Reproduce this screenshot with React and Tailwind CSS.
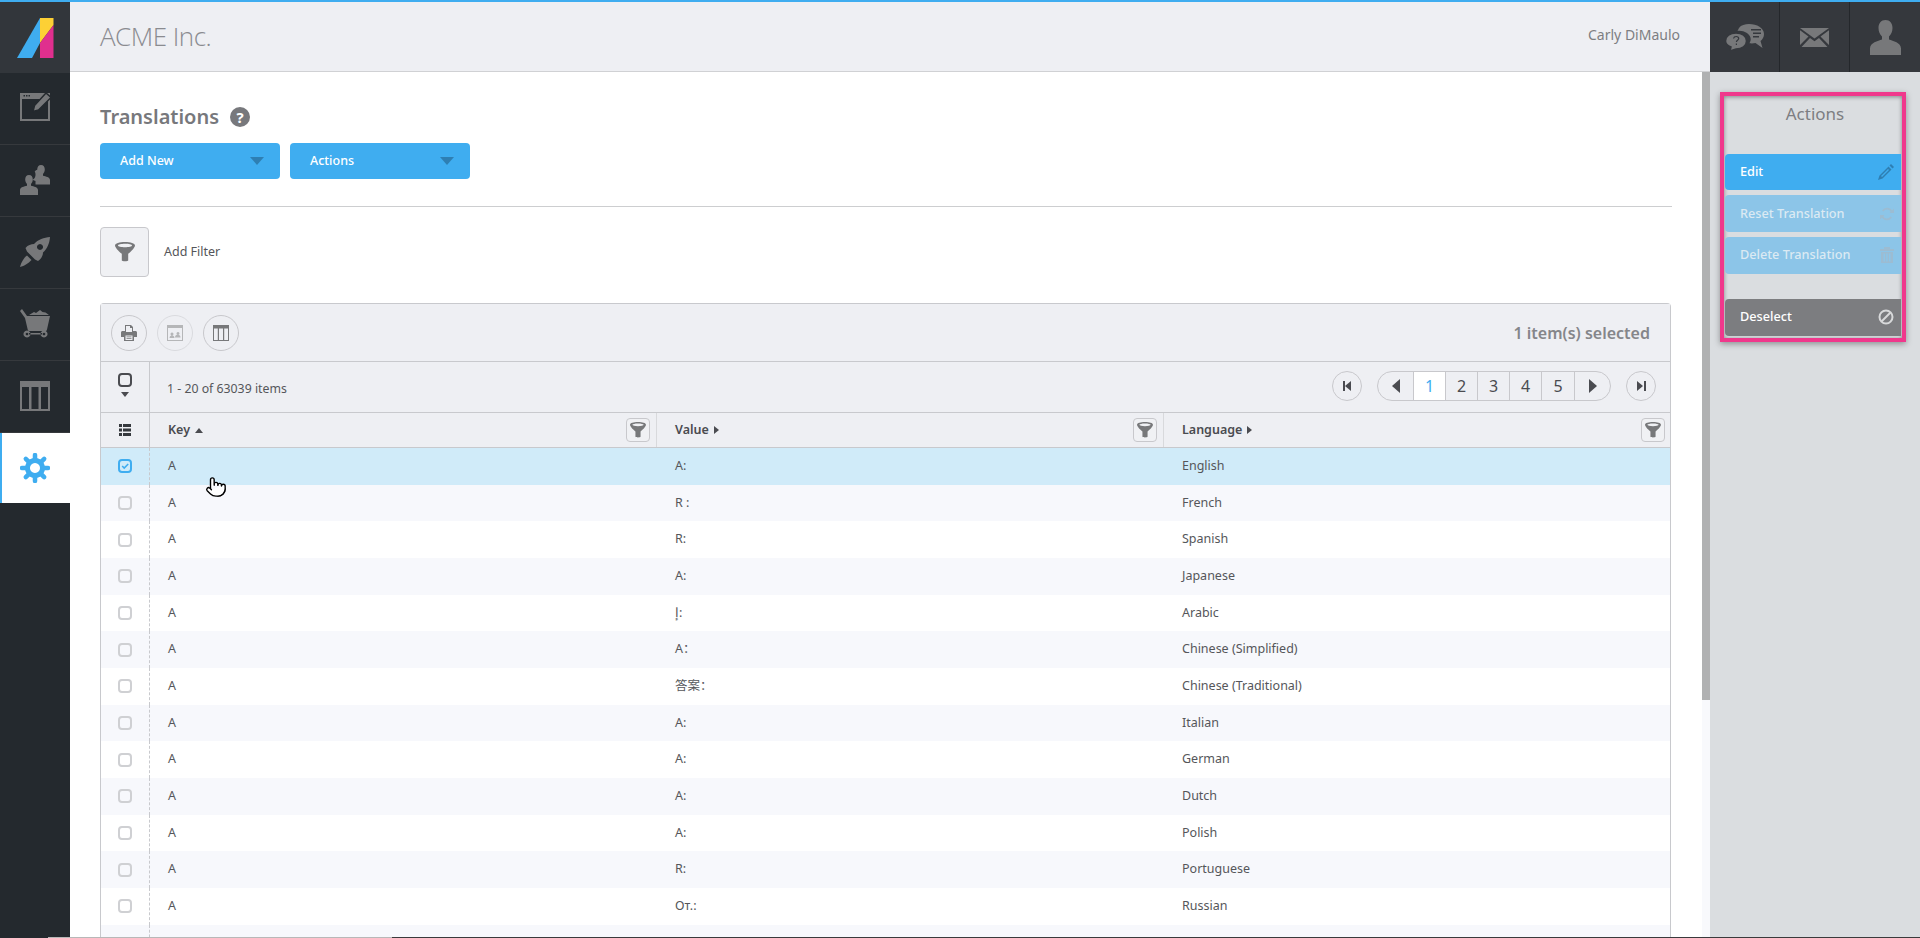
import { Pointer } from 'lucide-react'

const rows = [
  ['A:', 'English'],
  ['R :', 'French'],
  ['R:', 'Spanish'],
  ['A:', 'Japanese'],
  ['إ:', 'Arabic'],
  ['A：', 'Chinese (Simplified)'],
  ['答案：', 'Chinese (Traditional)'],
  ['A:', 'Italian'],
  ['A:', 'German'],
  ['A:', 'Dutch'],
  ['A:', 'Polish'],
  ['R:', 'Portuguese'],
  ['От.:', 'Russian'],
  ['', ''],
]

const gearAngles = [0, 45, 90, 135]

function Funnel({ className }) {
  return (
    <svg className={className} viewBox="0 0 20 20">
      <path fillRule="evenodd" fill="currentColor" d="M10 0C4.500 0 0 1.200 0 3.500c0 1.400 3 5.600 6.800 8.300V18.500c0 1 6.400 1 6.400 0V11.800C17 9.100 20 4.900 20 3.500 20 1.200 15.500 0 10 0zM10 1.800c3.900 0 7 .8 7 1.700s-3.100 1.700-7 1.700-7-.8-7-1.700 3.100-1.700 7-1.700z" />
    </svg>
  )
}

function FilterBtn() {
  return (
    <button className="w-6 h-6 bg-[#f0f1f4] border border-[#c8c8cc] rounded-sm flex items-center justify-center">
      <Funnel className="w-4 h-4 text-[#77787a]" />
    </button>
  )
}

function SideIcon({ children, active }) {
  return (
    <div className={active ? 'h-[70px] mb-0.5 bg-white border-l-2 border-[#3fadf0] flex items-center justify-center pr-0.5 text-[#3fadf0]' : 'h-[72px] pb-0.5 border-b border-[#36393d] flex items-center justify-center text-[#77787a]'}>
      {children}
    </div>
  )
}

function TopIcon({ children, last }) {
  return (
    <div className={last ? 'w-[70px] flex items-center justify-center text-[#77787a]' : 'w-[70px] border-r border-[#24272b] flex items-center justify-center text-[#77787a]'}>
      {children}
    </div>
  )
}

function Circle({ children, faded, small }) {
  if (small) {
    return <div className="w-[30px] h-[30px] rounded-full border border-[#c8c8cc] flex items-center justify-center">{children}</div>
  }
  return (
    <div className={faded ? 'w-9 h-9 rounded-full border border-[#dadbdf] flex items-center justify-center text-[#b5b6b8]' : 'w-9 h-9 rounded-full border border-[#c8c8cc] flex items-center justify-center text-[#77787a]'}>
      {children}
    </div>
  )
}

function Checkbox({ checked }) {
  if (checked) {
    return (
      <div className="w-3.5 h-3.5 rounded-sm border-2 border-[#3fadf0] flex items-center justify-center">
        <svg className="w-2 h-2" viewBox="0 0 10 10"><path d="M1.500 5l2.500 2.500 5-5" fill="none" stroke="#3fadf0" strokeWidth="2" /></svg>
      </div>
    )
  }
  return <div className="w-3.5 h-3.5 rounded-sm border-2 border-[#cfd0d3]" />
}

function ActionBtn({ label, icon, color }) {
  return (
    <div className={color}>
      <span>{label}</span>
      {icon}
    </div>
  )
}

export default function App() {
  return (
    <div className="relative h-[938px] overflow-hidden border-t-2 border-[#3fadf0] flex font-['Noto_Sans','Noto_Sans_CJK_SC',sans-serif] text-[12.5px] text-[#55565a]">
      {/* Sidebar */}
      <div className="w-[70px] shrink-0 bg-[#24292e]">
        <div className="h-[71px] bg-[#32363b] flex items-center justify-center">
          <svg className="w-[37px] h-10" viewBox="0 0 37 40">
            <path d="M0 40L23 0V25L15 40z" fill="#3fadf0" />
            <path d="M23 0H36.500V7L23 25z" fill="#fdd035" />
            <path d="M23 25L36.500 7V40H23z" fill="#e02f8e" />
          </svg>
        </div>
        <SideIcon>
          <svg className="w-[30px] h-7 -mt-0.5" viewBox="0 0 30 28" fill="currentColor">
            <path fillRule="evenodd" d="M0 0H30V28H0zM2 6V26H28V6z" />
            <path d="M3.500 2h1.500v1.500h-1.500zM6 2h1.500v1.500H6zM8.500 2H10v1.500H8.500z" fill="#24292e" />
            <path d="M26 0l5 4.500L18.500 17 13 18.500l1.500-6z" stroke="#24292e" strokeWidth="1.500" />
          </svg>
        </SideIcon>
        <SideIcon>
          <svg className="w-[30px] h-[30px]" viewBox="0 0 30 30" fill="currentColor">
            <path d="M21 0c2.600 0 3.800 2.100 3.800 4.500 0 1.900-.7 3.400-1.800 4.400v1.900c2.800.8 7 1.400 7 4.200v4.500H15.500v-3.500c-.9-.5-1.800-.8-2.500-1v-.5c2-1 2.600-3 2.500-5.500-.1-1.200-.4-2-.8-2.600.8-.7 1.700-1.400 2.500-1.600.1-2.800 1.300-4.800 3.800-4.800z" />
            <path d="M9 10c2.600 0 3.800 2.100 3.800 4.500 0 1.900-.7 3.400-1.800 4.400v1.900c2.800.8 7 1.400 7 4.200V30H0v-5c0-2.800 4.200-3.400 7-4.200v-1.900c-1.100-1-1.800-2.500-1.800-4.400C5.200 12.100 6.400 10 9 10z" />
          </svg>
        </SideIcon>
        <SideIcon>
          <svg className="w-[30px] h-[30px]" viewBox="0 0 30 30" fill="currentColor">
            <path fillRule="evenodd" d="M30 0c-.5 6-2.500 11.500-7 15.500 0 3-1.500 6-5 8.500l-3-1.500-8-8L5.500 11C8 8 11 7 14 7c4-4.500 10-6.500 16-7zM20 7a3 3 0 1 0 .01 0z" />
            <path d="M7 18.500l4.500 4.500C9 26 4 29 0 30c1-4 3.500-9 7-11.500z" />
          </svg>
        </SideIcon>
        <SideIcon>
          <svg className="w-[30px] h-[30px]" viewBox="0 0 30 30" fill="currentColor">
            <path d="M0 2l2-2 5 7h23l-3 13.500c-.2 1-.8 1.500-1.800 1.500H9.500c-1 0-1.500-.5-1.800-1.500L5 9z" />
            <path d="M9 6l5-3 2 1 4-3 2.500 2 3 .5L29 6z" />
            <path fillRule="evenodd" d="M9 24h13v1.500H9zM7 21.500a3.500 3.500 0 1 0 .01 0zM7 23.700a1.300 1.300 0 1 1-.01 0zM24 21.500a3.500 3.500 0 1 0 .01 0zM24 23.700a1.300 1.300 0 1 1-.01 0z" />
          </svg>
        </SideIcon>
        <SideIcon>
          <svg className="w-[30px] h-[30px]" viewBox="0 0 30 30" fill="currentColor">
            <path fillRule="evenodd" d="M0 0H30V30H0zM2 6V28H9V6zM11.500 6V28H18.500V6zM21 6V28H28V6z" />
          </svg>
        </SideIcon>
        <SideIcon active>
          <svg className="w-[30px] h-[30px]" viewBox="0 0 30 30" fill="currentColor">
            <path fillRule="evenodd" d="M15 5a10 10 0 1 0 .01 0zM15 10a5 5 0 1 1-.01 0z" />
            {gearAngles.map((a) => (
              <line key={a} x1="15" y1="2" x2="15" y2="28" stroke="currentColor" strokeWidth="4.500" strokeLinecap="round" strokeDasharray="5 16 5" transform={`rotate(${a} 15 15)`} />
            ))}
          </svg>
        </SideIcon>
      </div>

      <div className="flex-1 min-w-0 flex flex-col">
        {/* Header */}
        <div className="h-[70px] flex shrink-0">
          <div className="flex-1 bg-[#eeeff3] border-b border-[#d0d1d4] flex items-center justify-between pl-[30px] pr-[30px]">
            <span className="text-[26px] font-light tracking-[-0.5px] text-[#8a8b90] font-['Open_Sans',sans-serif]">ACME Inc.</span>
            <span className="text-[14px] text-[#7d7e82] -mt-1">Carly DiMaulo</span>
          </div>
          <div className="w-[210px] bg-[#35383d] flex">
            <TopIcon>
              <svg className="w-10 h-7" viewBox="0 0 40 28" fill="currentColor">
                <path d="M14 5C16 2 20 1 24 1c8 0 15 4 15 10 0 3-1.500 5.500-3.500 7l2 7-7-5c-2 .500-4 .500-6 .300 1-2 1.500-3.500 1-5.500-1-4-6-7-11-7-1 0-1.500 0-2 .200z" />
                <path d="M11 10c6 0 10.500 3 10.500 8s-4.500 8-10.500 8l-6 2 1-4C2.500 22.500 0.500 20.500.5 18c0-5 4.500-8 10.500-8z" stroke="#35383d" strokeWidth="1.500" />
                <path d="M26 6h10v1.500H26zM28 9.500h8V11h-8zM28 13h6v1.500h-6z" fill="#35383d" />
                <path d="M8.500 15.500c.3-1.500 1.500-2 2.700-2 1.300 0 2.500.8 2.500 2.100 0 1.600-2.300 1.800-2.300 3.400M11.400 20.500v1.500" fill="none" stroke="#35383d" strokeWidth="1.200" />
              </svg>
            </TopIcon>
            <TopIcon>
              <svg className="w-[29px] h-[19px]" viewBox="0 0 29 19" fill="currentColor">
                <path d="M0 0L14.500 10.500 29 0zM0 2.300V17l8.500-8.500zM29 2.300V17l-8.500-8.500zM1.500 19H27.500L19 10l-4.500 3.300L10 10z" />
              </svg>
            </TopIcon>
            <TopIcon last>
              <svg className="w-[31px] h-[35px]" viewBox="0 0 31 35" fill="currentColor">
                <path d="M15.500 0c4.500 0 7 3.500 7 8 0 3.500-1.300 6.500-3.500 8.500v3c4 1.500 12 3 12 9V35H0v-6.500c0-6 8-7.500 12-9v-3C9.800 14.500 8.500 11.500 8.500 8c0-4.500 2.500-8 7-8z" />
              </svg>
            </TopIcon>
          </div>
        </div>

        <div className="flex-1 min-h-0 flex">
          {/* Main */}
          <div className="relative flex-1 min-w-0 bg-white px-[30px] pt-[33px]">
            <div className="flex items-center gap-[11px] h-6">
              <span className="text-[20px] font-semibold text-[#77787c]">Translations</span>
              <span className="w-5 h-5 rounded-full bg-[#77787c] text-white text-[15px] font-bold flex items-center justify-center">?</span>
            </div>
            <div className="flex gap-2.5 mt-[14px]">
              <div className="w-[180px] h-9 rounded-sm bg-[#3fadf0] text-white text-[12.5px] font-medium flex items-center justify-between pl-5 pr-4">
                <span>Add New</span>
                <span className="w-0 h-0 border-x-[7px] border-x-transparent border-t-8 border-t-[#2e7fb3]" />
              </div>
              <div className="w-[180px] h-9 rounded-sm bg-[#3fadf0] text-white text-[12.5px] font-medium flex items-center justify-between pl-5 pr-4">
                <span>Actions</span>
                <span className="w-0 h-0 border-x-[7px] border-x-transparent border-t-8 border-t-[#2e7fb3]" />
              </div>
            </div>
            <div className="h-px bg-[#cdced0] mt-[27px]" />
            <div className="flex items-center gap-[15px] mt-5">
              <div className="w-[49px] h-[50px] bg-[#f0f1f4] border border-[#c8c8cc] rounded-sm flex items-center justify-center">
                <Funnel className="w-5 h-5 text-[#77787a]" />
              </div>
              <span className="text-[12.5px]">Add Filter</span>
            </div>

            {/* Table */}
            <div className="mt-[26px] mr-px border-x border-t border-[#c8c9cd] rounded-t-sm">
              <div className="h-[58px] bg-[#eeeff3] border-b border-[#c8c9cd] flex items-center justify-between pl-2.5 pr-[20px]">
                <div className="flex gap-2.5">
                  <Circle>
                    <svg className="w-4 h-4" viewBox="0 0 16 16" fill="currentColor"><path fillRule="evenodd" d="M4 0h6l2 2v4h2.500c.8 0 1.500.7 1.500 1.500V12h-3v4H3v-4H0V7.500C0 6.700.7 6 1.500 6H4zM5 1v6h6V3H9V1zM4.500 10.500V15h7v-4.500zM5.500 11.500h5v.7h-5zM5.500 13h5v.7h-5z" /></svg>
                  </Circle>
                  <Circle faded>
                    <svg className="w-4 h-4" viewBox="0 0 16 16" fill="currentColor"><path fillRule="evenodd" d="M0 0h16v16H0zM1 3v12h14V3zM5 7.500a1.500 1.500 0 1 1-.01 0zM11 7a1.500 1.500 0 1 1-.01 0zM2.500 13c0-2 1.500-2.500 2.500-2.500s2.500.5 2.500 2.500zM8 12.500c0-2.500 1.500-2.800 3-2.800s2.500.8 2.500 2.800z" /></svg>
                  </Circle>
                  <Circle>
                    <svg className="w-4 h-4" viewBox="0 0 16 16" fill="currentColor"><path fillRule="evenodd" d="M0 0h16v16H0zM1 3.500V15h3.800V3.500zM6 3.500V15h4V3.500zM11.200 3.500V15H15V3.500z" /></svg>
                  </Circle>
                </div>
                <span className="text-[16px] font-semibold text-[#85868a]">1 item(s) selected</span>
              </div>
              <div className="h-[51px] bg-[#eeeff3] border-b border-[#c8c9cd] flex">
                <div className="w-[49px] border-r border-[#c8c9cd] flex flex-col items-center pt-[11px]">
                  <div className="w-3.5 h-3.5 rounded-sm border-2 border-[#4a4b50]" />
                  <span className="mt-[5px] w-0 h-0 border-x-[4px] border-x-transparent border-t-[5px] border-t-[#4a4b50]" />
                </div>
                <div className="flex-1 flex items-center justify-between pl-[17px] pr-[14px]">
                  <span className="text-[12.300px] mt-[5px]">1 - 20 of 63039 items</span>
                  <div className="flex items-center gap-[15px] mb-0.5">
                    <Circle small>
                      <span className="flex items-center"><span className="w-0.5 h-2.5 bg-[#4a4b50]" /><span className="w-0 h-0 border-y-[5px] border-y-transparent border-r-[6px] border-r-[#4a4b50]" /></span>
                    </Circle>
                    <div className="h-[30px] rounded-full border border-[#c8c8cc] flex overflow-hidden text-[16px] text-[#4a4b50]">
                      <div className="w-9 border-r border-[#c8c8cc] flex items-center justify-center"><span className="w-0 h-0 border-y-[7px] border-y-transparent border-r-[8px] border-r-[#4a4b50]" /></div>
                      <div className="w-8 bg-white border-r border-[#c8c8cc] flex items-center justify-center text-[#3fadf0]">1</div>
                      <div className="w-8 border-r border-[#c8c8cc] flex items-center justify-center">2</div>
                      <div className="w-8 border-r border-[#c8c8cc] flex items-center justify-center">3</div>
                      <div className="w-8 border-r border-[#c8c8cc] flex items-center justify-center">4</div>
                      <div className="w-[33px] border-r border-[#c8c8cc] flex items-center justify-center">5</div>
                      <div className="w-[35px] flex items-center justify-center"><span className="w-0 h-0 border-y-[7px] border-y-transparent border-l-[8px] border-l-[#4a4b50]" /></div>
                    </div>
                    <Circle small>
                      <span className="flex items-center"><span className="w-0 h-0 border-y-[5px] border-y-transparent border-l-[6px] border-l-[#4a4b50]" /><span className="w-0.5 h-2.5 bg-[#4a4b50] ml-px" /></span>
                    </Circle>
                  </div>
                </div>
              </div>
              <div className="h-[35px] bg-[#eeeff3] border-b border-[#c8c9cd] flex font-semibold text-[12.500px] text-[#4a4b50]">
                <div className="w-[49px] border-r border-[#c8c9cd] flex items-center justify-center">
                  <svg className="w-3 h-3" viewBox="0 0 12 12" fill="#35383d"><path d="M0 0h3v3H0zM4 0h8v3H4zM0 4.500h3v3H0zM4 4.500h8v3H4zM0 9h3v3H0zM4 9h8v3H4z" /></svg>
                </div>
                <div className="w-[507px] border-r border-[#d8d9dc] flex items-center justify-between pl-[18px] pr-[6px]">
                  <span className="flex items-center gap-[5px]">Key <span className="w-0 h-0 border-x-[4px] border-x-transparent border-b-[5px] border-b-[#4a4b50]" /></span>
                  <FilterBtn />
                </div>
                <div className="w-[507px] border-r border-[#d8d9dc] flex items-center justify-between pl-[18px] pr-[6px]">
                  <span className="flex items-center gap-[5px]">Value <span className="w-0 h-0 border-y-[4px] border-y-transparent border-l-[5px] border-l-[#4a4b50]" /></span>
                  <FilterBtn />
                </div>
                <div className="flex-1 flex items-center justify-between pl-[18px] pr-[5px]">
                  <span className="flex items-center gap-[5px]">Language <span className="w-0 h-0 border-y-[4px] border-y-transparent border-l-[5px] border-l-[#4a4b50]" /></span>
                  <FilterBtn />
                </div>
              </div>
              {rows.map((row, i) => (
                <div key={i} className={i === 0 ? 'h-[36.67px] flex items-center bg-[#d0ebf9]' : i % 2 === 1 ? 'h-[36.67px] flex items-center bg-[#f7f8fc]' : 'h-[36.67px] flex items-center bg-white'}>
                  <div className="w-[49px] h-full border-r border-dashed border-[#c8c9cd] flex items-center justify-center">
                    {row[1] && <Checkbox checked={i === 0} />}
                  </div>
                  <div className="w-[507px] pl-[18px]">{row[1] && 'A'}</div>
                  <div className="w-[507px] pl-[18px]">{row[0]}</div>
                  <div className="flex-1 pl-[18px]">{row[1]}</div>
                </div>
              ))}
            </div>

            {/* Cursor over first row */}
            <Pointer className="absolute left-[135px] top-[404px] w-[22px] h-[22px] text-black" fill="white" strokeWidth={1.500} />
          </div>

          {/* Scrollbar */}
          <div className="w-2 shrink-0 bg-[#f8f9fc]">
            <div className="h-[628px] bg-[#b0b1b2]" />
          </div>

          {/* Right panel */}
          <div className="w-[210px] shrink-0 bg-[#dadde0] pt-5 pl-2.5 pr-3.5">
            <div className="h-[250px] border-4 border-[#f0388c] shadow-[0_2px_6px_rgba(0,0,0,0.35),inset_0_1px_4px_rgba(0,0,0,0.4)] px-[1px] pt-[1px]">
              <div className="text-center text-[17px] text-[#7d7e82] leading-6 pt-[5px] pl-1 h-[57px]">Actions</div>
              <ActionBtn
                label="Edit"
                color="h-9 rounded-l-sm bg-[#3fadf0] text-white text-[12.7px] font-medium flex items-center justify-between pl-[15px] pr-[7px]"
                icon={
                  <svg className="w-4 h-4 text-[#2e7fb3]" viewBox="0 0 16 16" fill="currentColor">
                    <path d="M13 0l3 3-1.500 1.500-3-3z" />
                    <path fillRule="evenodd" d="M10.500 2.500l3 3L4.500 14.500 0 16l1.500-4.500zM10 5L3 12l1 1 7-7z" />
                  </svg>
                }
              />
              <ActionBtn
                label="Reset Translation"
                color="h-[37px] mt-[5px] rounded-l-sm bg-[#8cc5e8] text-[#dbeaf3] text-[12.7px] font-medium flex items-center justify-between pl-[15px] pr-[7px]"
                icon={
                  <svg className="w-3.5 h-3.5 text-[#9cbcd2]" viewBox="0 0 14 14" fill="none" stroke="currentColor" strokeWidth="1.800">
                    <path d="M11.800 5A5 5 0 0 0 2.800 4M2.200 9a5 5 0 0 0 9 1" />
                    <path d="M14 1.500V6H9.500zM0 12.500V8h4.500z" fill="currentColor" stroke="none" />
                  </svg>
                }
              />
              <ActionBtn
                label="Delete Translation"
                color="h-[37px] mt-[5px] pb-0.5 rounded-l-sm bg-[#8cc5e8] text-[#dbeaf3] text-[12.7px] font-medium flex items-center justify-between pl-[15px] pr-[7px]"
                icon={
                  <svg className="w-3.5 h-4 text-[#9cbcd2]" viewBox="0 0 14 16" fill="currentColor"><path fillRule="evenodd" d="M0 2h4V0h6v2h4v2H0zM1 5h12v11H1zM3.500 6.500v8h1.500v-8zM6.200 6.500v8h1.500v-8zM9 6.500v8h1.500v-8z" /></svg>
                }
              />
              <ActionBtn
                label="Deselect"
                color="h-[37px] mt-[25px] pb-0.5 rounded-l-sm bg-[#7c7d80] text-white text-[12.7px] font-medium flex items-center justify-between pl-[15px] pr-[7px]"
                icon={
                  <svg className="w-4 h-4 text-[#d8d9da]" viewBox="0 0 16 16" fill="none" stroke="currentColor" strokeWidth="2"><circle cx="8" cy="8" r="6.500" /><path d="M3.500 12.500l9-9" /></svg>
                }
              />
            </div>
          </div>
        </div>
      </div>

      {/* Window edge along the bottom */}
      <div className="absolute bottom-0 left-[48px] right-0 h-px flex">
        <div className="w-[344px] bg-[#b8b8b8]" />
        <div className="flex-1 bg-[#3a3a3c]" />
      </div>
    </div>
  )
}
